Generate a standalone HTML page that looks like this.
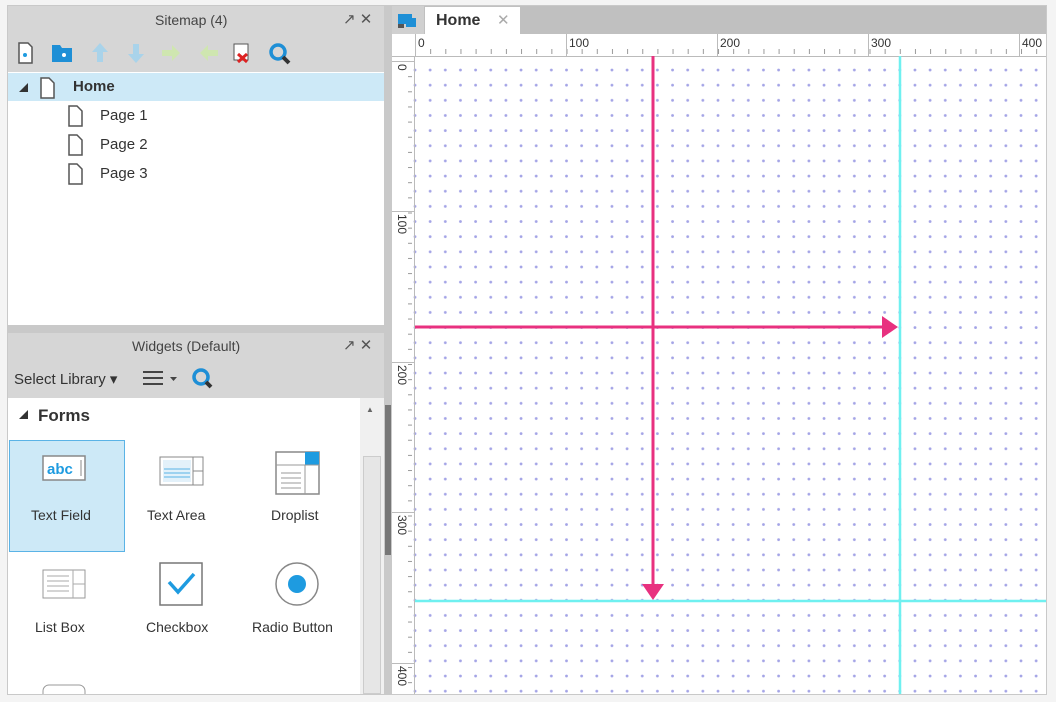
<!DOCTYPE html>
<html><head><meta charset="utf-8"><style>
*{box-sizing:border-box;margin:0;padding:0}
body{width:1056px;height:702px;background:#f4f4f4;font-family:"Liberation Sans",Arial,sans-serif;position:relative;overflow:hidden}
.a{position:absolute}
.t{font-size:15px;color:#333}
</style></head><body>
<div class="a" style="left:7px;top:5px;width:1040px;height:690px;background:#c9c9c9"></div>
<!-- sitemap -->
<div class="a" style="left:8px;top:6px;width:376px;height:66px;background:#d6d6d6"></div>
<div class="a t" style="left:155px;top:12px;font-size:14px;color:#444">Sitemap (4)</div>
<div class="a t" style="left:343px;top:10px;color:#555">↗ ✕</div>
<svg class="a" style="left:14px;top:40px" width="290" height="28">
<path d="M5 3h9l4 4v16H5z" fill="#fff" stroke="#555" stroke-width="1.5"/><circle cx="11" cy="15" r="2" fill="#1e9be0"/>
<path d="M38 5h8l2 3h10v14H38z" fill="#1e8fd6"/><circle cx="50" cy="15" r="2" fill="#fff"/>
<path d="M86 3l-8 9h5v10h6V12h5z" fill="#a9d3ea"/>
<path d="M122 23l-8-9h5V4h6v10h5z" fill="#a9d3ea"/>
<path d="M148 10h10V5l8 8-8 8v-5h-10z" fill="#cfe6b0"/>
<path d="M204 10h-10V5l-8 8 8 8v-5h10z" fill="#cfe6b0"/>
<rect x="220" y="4" width="14" height="16" fill="#fff" stroke="#555"/><path d="M224 14l9 8M233 14l-9 8" stroke="#d22" stroke-width="3"/>
<circle cx="264" cy="12" r="7" fill="none" stroke="#1e8fd6" stroke-width="3.5"/><path d="M269 17l6 6" stroke="#333" stroke-width="4"/>
</svg>
<div class="a" style="left:8px;top:72px;width:376px;height:253px;background:#fff"></div>
<div class="a" style="left:8px;top:73px;width:376px;height:28px;background:#cde9f7"></div>
<div class="a" style="left:19px;top:83px;width:0;height:0;border-left:9px solid transparent;border-bottom:9px solid #333"></div>
<svg class="a" style="left:38px;top:76px" width="20" height="110">
<path d="M3 2h8l5 5v15H3z" fill="#fff" stroke="#555" stroke-width="1.5"/>
</svg>
<svg class="a" style="left:66px;top:104px" width="20" height="85">
<path d="M3 2h8l5 5v15H3z" fill="#fff" stroke="#555" stroke-width="1.5"/>
<path d="M3 31h8l5 5v15H3z" fill="#fff" stroke="#555" stroke-width="1.5"/>
<path d="M3 60h8l5 5v15H3z" fill="#fff" stroke="#555" stroke-width="1.5"/>
</svg>
<div class="a t" style="left:73px;top:78px;font-weight:bold">Home</div>
<div class="a t" style="left:100px;top:107px">Page 1</div>
<div class="a t" style="left:100px;top:136px">Page 2</div>
<div class="a t" style="left:100px;top:165px">Page 3</div>
<!-- widgets -->
<div class="a" style="left:8px;top:333px;width:376px;height:65px;background:#d6d6d6"></div>
<div class="a t" style="left:132px;top:338px;font-size:14px;color:#444">Widgets (Default)</div>
<div class="a t" style="left:343px;top:336px;color:#555">↗ ✕</div>
<div class="a t" style="left:14px;top:370px">Select Library ▾</div>
<svg class="a" style="left:140px;top:366px" width="80" height="28">
<path d="M3 6h20M3 12h20M3 18h20" stroke="#444" stroke-width="2"/><path d="M30 11h7l-3.5 4z" fill="#444"/>
<circle cx="61" cy="11" r="7" fill="none" stroke="#1e8fd6" stroke-width="3.5"/><path d="M66 16l5 5" stroke="#333" stroke-width="4"/>
</svg>
<div class="a" style="left:8px;top:398px;width:352px;height:296px;background:#fff"></div>
<div class="a" style="left:360px;top:398px;width:24px;height:296px;background:#f0f0f0"></div>
<div class="a" style="left:363px;top:456px;width:18px;height:238px;background:#e6e6e6;border:1px solid #ccc"></div>
<div class="a" style="left:366px;top:405px;font-size:8px;color:#666">▲</div>
<div class="a" style="left:384px;top:333px;width:8px;height:361px;background:#c9c9c9"></div>
<div class="a" style="left:385px;top:405px;width:6px;height:150px;background:#777"></div>
<div class="a" style="left:19px;top:410px;width:0;height:0;border-left:9px solid transparent;border-bottom:9px solid #333"></div>
<div class="a t" style="left:38px;top:406px;font-size:17px;font-weight:bold">Forms</div>
<div class="a" style="left:9px;top:440px;width:116px;height:112px;background:#cde9f7;border:1.5px solid #5ab3e6"></div>
<svg class="a" style="left:8px;top:445px" width="352" height="249">
<rect x="35" y="11" width="42" height="24" fill="#fff" stroke="#888" stroke-width="1.5"/>
<text x="39" y="29" font-family="Liberation Sans" font-size="15" font-weight="bold" fill="#1e9be0">abc</text><path d="M73 15v16" stroke="#888"/>
<rect x="152" y="12" width="43" height="28" fill="#fff" stroke="#888"/><rect x="155" y="15" width="28" height="22" fill="#e3f1fa"/><path d="M156 24h26M156 28h26M156 32h26" stroke="#5ab3e6"/><path d="M185 12v28M185 26h10" stroke="#888"/>
<rect x="268" y="7" width="43" height="42" fill="#fff" stroke="#888" stroke-width="1.5"/><rect x="297" y="7" width="14" height="13" fill="#1e9be0"/><path d="M268 20h43M297 20v29M273 28h20M273 33h20M273 38h20M273 43h20" stroke="#999"/>
<rect x="35" y="125" width="42" height="28" fill="#fff" stroke="#999"/><path d="M39 131h22M39 136h22M39 141h22M39 146h22M65 125v28M65 139h12" stroke="#aaa"/>
<rect x="152" y="118" width="42" height="42" fill="#fff" stroke="#777" stroke-width="1.5"/><path d="M161 137l9 10 16-18" fill="none" stroke="#1e9be0" stroke-width="3.5"/>
<circle cx="289" cy="139" r="21" fill="#fff" stroke="#888" stroke-width="1.5"/><circle cx="289" cy="139" r="9" fill="#1e9be0"/>
<rect x="35" y="240" width="42" height="20" rx="6" fill="#fff" stroke="#999"/>
</svg>
<div class="a t" style="left:31px;top:507px;font-size:14px">Text Field</div>
<div class="a t" style="left:147px;top:507px;font-size:14px">Text Area</div>
<div class="a t" style="left:271px;top:507px;font-size:14px">Droplist</div>
<div class="a t" style="left:35px;top:619px;font-size:14px">List Box</div>
<div class="a t" style="left:146px;top:619px;font-size:14px">Checkbox</div>
<div class="a t" style="left:252px;top:619px;font-size:14px">Radio Button</div>
<!-- canvas -->
<div class="a" style="left:392px;top:6px;width:654px;height:28px;background:#c0c0c0"></div>
<div class="a" style="left:392px;top:6px;width:32px;height:28px;background:#d0d0d0"></div>
<svg class="a" style="left:396px;top:12px" width="24" height="18"><rect x="2" y="2" width="14" height="10" fill="#1e8fd6"/><rect x="10" y="6" width="10" height="9" fill="#1e8fd6"/><rect x="2" y="12" width="6" height="4" fill="#555"/></svg>
<div class="a" style="left:425px;top:7px;width:95px;height:27px;background:#fff"></div>
<div class="a t" style="left:436px;top:12px;font-weight:bold;font-size:16px">Home</div>
<div class="a" style="left:497px;top:11px;color:#aaa;font-size:15px">✕</div>
<div class="a" style="left:392px;top:34px;width:654px;height:660px;background:#fff"></div>
<svg class="a" style="left:392px;top:34px" width="654" height="660">
<defs><pattern id="d" x="21.5" y="34.5" width="15.15" height="15.15" patternUnits="userSpaceOnUse"><circle cx="1.5" cy="1.5" r="1.4" fill="#a4a4e6"/></pattern>
<pattern id="tx" x="23" y="0" width="15.15" height="20" patternUnits="userSpaceOnUse"><path d="M0.5 15v5" stroke="#999"/></pattern>
<pattern id="ty" x="0" y="27" width="20" height="15.15" patternUnits="userSpaceOnUse"><path d="M16 0.5h7" stroke="#999"/></pattern></defs>
<rect x="20" y="22" width="634" height="638" fill="url(#d)"/>
<rect x="23" y="0" width="631" height="22" fill="url(#tx)"/>
<rect x="0" y="22" width="23" height="638" fill="url(#ty)"/>
<path d="M0 22.5h654M22.5 22V660" stroke="#bbb"/>
<path d="M23.5 0v22M174.5 0v22M325.5 0v22M476.5 0v22M627.5 0v22" stroke="#bbb"/>
<path d="M0 27.5h23M0 177.5h23M0 328.5h23M0 478.5h23M0 629.5h23" stroke="#bbb"/>
<g font-family="Liberation Sans" font-size="12" fill="#333">
<text x="26" y="13">0</text><text x="177" y="13">100</text><text x="328" y="13">200</text><text x="479" y="13">300</text><text x="630" y="13">400</text>
<text transform="translate(6,30) rotate(90)">0</text>
<text transform="translate(6,180) rotate(90)">100</text>
<text transform="translate(6,331) rotate(90)">200</text>
<text transform="translate(6,481) rotate(90)">300</text>
<text transform="translate(6,632) rotate(90)">400</text>
</g>
<path d="M508 22V660" stroke="#6ff0f0" stroke-width="2.5"/>
<path d="M23 567H654" stroke="#6ff0f0" stroke-width="2.5"/>
<path d="M261 22V552" stroke="#e8317f" stroke-width="3"/><path d="M250 550h22l-11 16z" fill="#e8317f"/>
<path d="M23 293H492" stroke="#e8317f" stroke-width="3"/><path d="M490 282v22l16-11z" fill="#e8317f"/>
</svg>
</body></html>
